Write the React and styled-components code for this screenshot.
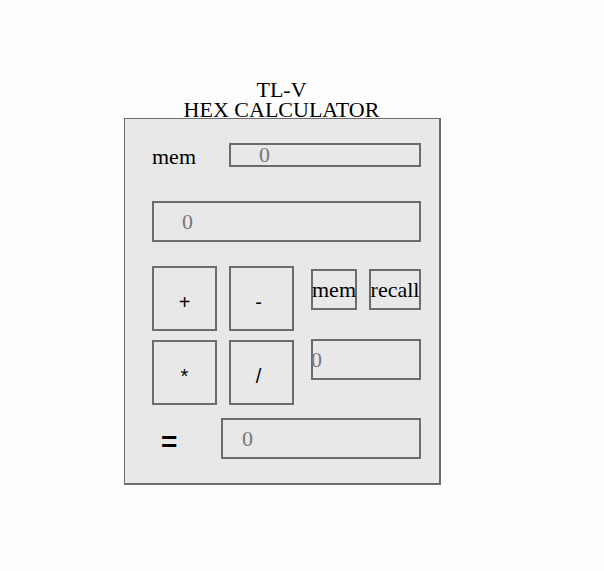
import React from "react";
import styled, { createGlobalStyle } from "styled-components";

const Global = createGlobalStyle`
  html, body { margin: 0; padding: 0; background: #fdfdfd; }
  body { font-family: "Liberation Serif", "Times New Roman", serif; }
`;

const Page = styled.div`
  padding: 80px 0 0 124px;
`;

const Wrapper = styled.div`
  width: 317px;
`;

const Title = styled.h1`
  margin: 0;
  font-weight: normal;
  font-size: 22px;
  line-height: 20px;
  text-align: center;
  color: #000;
  position: relative;
  z-index: 1;
  margin-bottom: -2px;
  padding-right: 2px;
`;

const Panel = styled.div`
  box-sizing: border-box;
  width: 317px;
  background: #e8e8e8;
  border: 2px solid #6c6c6c;
  border-width: 1px 2px 2px 1px;
  padding: 24px 18px 24px 27px;
  display: flex;
  flex-direction: column;
`;

const MemRow = styled.div`
  display: flex;
  align-items: center;
  justify-content: space-between;
  height: 24px;
`;

const Label = styled.span`
  font-size: 22px;
  color: #000;
  padding-top: 4px;
`;

const Field = styled.div`
  box-sizing: border-box;
  width: ${(p) => p.$w}px;
  height: ${(p) => p.$h}px;
  border: 2px solid #6c6c6c;
  background: #e8e8e8;
  color: #777;
  font-size: 22px;
  line-height: 1;
  display: flex;
  align-items: ${(p) => (p.$top ? "flex-start" : "center")};
  padding-left: ${(p) => p.$pad}px;
  padding-top: ${(p) => (p.$top ? 8 : 0)}px;
  text-indent: ${(p) => (p.$top ? -2 : 0)}px;
`;

const Display = styled(Field)`
  margin-top: 34px;
`;

const Keypad = styled.div`
  margin-top: 24px;
  display: flex;
  gap: 17px;
`;

const Ops = styled.div`
  display: grid;
  grid-template-columns: 65px 65px;
  grid-auto-rows: 65px;
  column-gap: 12px;
  row-gap: 9px;
`;

const OpButton = styled.div`
  box-sizing: border-box;
  border: 2px solid #6c6c6c;
  font-family: "Liberation Sans", Arial, sans-serif;
  font-size: 20px;
  color: #000;
  display: flex;
  align-items: center;
  justify-content: center;
  padding-top: 8px;
  padding-right: ${(p) => (p.$shift ? 6 : 0)}px;
`;

const Side = styled.div`
  padding-top: 3px;
  display: flex;
  flex-direction: column;
  gap: 29px;
`;

const MemButtons = styled.div`
  display: flex;
  gap: 12px;
`;

const TextButton = styled.div`
  box-sizing: border-box;
  width: ${(p) => p.$w}px;
  height: 41px;
  border: 2px solid #6c6c6c;
  font-size: 22px;
  color: #000;
  display: flex;
  align-items: center;
  justify-content: center;
  white-space: nowrap;
`;

const ResultRow = styled.div`
  margin-top: 13px;
  display: flex;
  align-items: center;
`;

const Equals = styled.span`
  width: 69px;
  padding-left: 9px;
  box-sizing: border-box;
  font-family: "Liberation Sans", Arial, sans-serif;
  font-weight: bold;
  font-size: 28px;
  color: #000;
  padding-top: 6px;
`;

export default function App() {
  return (
    <Page>
      <Global />
      <Wrapper>
        <Title>
          TL-V
          <br />
          HEX CALCULATOR
        </Title>
        <Panel>
          <MemRow>
            <Label>mem</Label>
            <Field $w={192} $h={24} $pad={28}>0</Field>
          </MemRow>
          <Display $w={269} $h={41} $pad={28}>0</Display>
          <Keypad>
            <Ops>
              <OpButton>+</OpButton>
              <OpButton $shift>-</OpButton>
              <OpButton>*</OpButton>
              <OpButton $shift>/</OpButton>
            </Ops>
            <Side>
              <MemButtons>
                <TextButton $w={46}>mem</TextButton>
                <TextButton $w={52}>recall</TextButton>
              </MemButtons>
              <Field $w={110} $h={41} $pad={0} $top>0</Field>
            </Side>
          </Keypad>
          <ResultRow>
            <Equals>=</Equals>
            <Field $w={200} $h={41} $pad={19}>0</Field>
          </ResultRow>
        </Panel>
      </Wrapper>
    </Page>
  );
}
